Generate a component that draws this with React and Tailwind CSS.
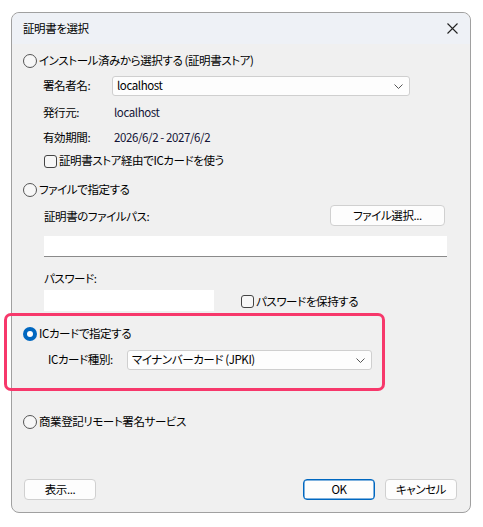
import React from "react";

const font = {
  fontFamily: '"Noto Sans CJK JP", "Noto Sans", sans-serif',
  fontFeatureSettings: '"palt"',
};

function Radio({ checked, label }) {
  return (
    <div className="flex h-[20px] items-center pl-[11px]">
      {checked ? (
        <span className="flex h-[14px] w-[14px] items-center justify-center rounded-full bg-[#0067c0]">
          <span className="h-[6px] w-[6px] rounded-full bg-white" />
        </span>
      ) : (
        <span className="h-[14px] w-[14px] rounded-full border border-[#555] bg-[#f7f7f7]" />
      )}
      <span className="ml-[2px]">{label}</span>
    </div>
  );
}

function Check({ label }) {
  return (
    <div className="flex items-center">
      <span className="h-[13px] w-[13px] rounded-[3px] border border-[#444] bg-[#f7f7f7]" />
      <span className="ml-[2px]">{label}</span>
    </div>
  );
}

function Combo({ value, className }) {
  return (
    <div
      className={`flex h-[20px] items-center justify-between rounded-[3px] border border-[#cfcfcf] bg-[#fdfdfd] pl-[4px] pr-[6px] ${className}`}
    >
      <span>{value}</span>
      <svg width="9" height="5" viewBox="0 0 9 5" fill="none">
        <path d="M0.5 0.5 L4.5 4.5 L8.5 0.5" stroke="#555" strokeWidth="1" />
      </svg>
    </div>
  );
}

function Button({ children, primary, className = "" }) {
  return (
    <div
      className={`flex h-[21px] items-center justify-center rounded-[4px] bg-[#fdfdfd] ${
        primary ? "border border-[#0067c0] shadow-[inset_0_0_0_0.5px_#0067c0]" : "border border-[#d0d0d0]"
      } ${className}`}
    >
      {children}
    </div>
  );
}

export default function App() {
  return (
    <div
      className="min-h-[527px] w-[483px] bg-white pl-[11px] pt-[12px] text-[11.5px] leading-none tracking-[-0.4px] text-black"
      style={font}
    >
      <div className="flex h-[501px] w-[460px] flex-col rounded-[8px] border border-[#a0a0a0] bg-[#f0f0f0]">
        {/* title bar */}
        <div className="flex h-[31px] items-center justify-between rounded-t-[8px] bg-[#eef1f6] pl-[11px] pr-[12px]">
          <span>証明書を選択</span>
          <svg width="11" height="11" viewBox="0 0 11 11">
            <path d="M0.5 0.5 L10.5 10.5 M10.5 0.5 L0.5 10.5" stroke="#222" strokeWidth="1.1" />
          </svg>
        </div>

        <div className="flex flex-1 flex-col pt-[7px]">
          <Radio label="インストール済みから選択する (証明書ストア)" />

          <div className="mt-[5px] flex items-center pl-[31px]">
            <span className="w-[69px]">署名者名:</span>
            <Combo value="localhost" className="w-[298px]" />
          </div>
          <div className="mt-[7px] flex h-[20px] items-center pl-[31px]">
            <span className="w-[71px]">発行元:</span>
            <span className="text-[#141436]">localhost</span>
          </div>
          <div className="mt-[5px] flex h-[20px] items-center pl-[31px]">
            <span className="w-[71px]">有効期間:</span>
            <span className="text-[#141436]">2026/6/2 - 2027/6/2</span>
          </div>
          <div className="mt-[3px] flex h-[20px] items-center pl-[32px]">
            <Check label="証明書ストア経由でICカードを使う" />
          </div>

          <div className="mt-[9px]">
            <Radio label="ファイルで指定する" />
          </div>
          <div className="mt-[5px] flex items-center justify-between pl-[32px] pr-[25px]">
            <span className="pt-[3px]">証明書のファイルパス:</span>
            <Button className="w-[115px]">ファイル選択...</Button>
          </div>
          <div className="ml-[32px] mt-[10px] h-[21px] w-[403px] border-b border-[#8a8a8a] bg-white" />
          <div className="mt-[12px] flex h-[20px] items-center pl-[32px]">パスワード:</div>
          <div className="mt-[1px] flex items-center pl-[32px]">
            <div className="h-[21px] w-[170px] bg-white" />
            <div className="ml-[27px] pt-[2px]">
              <Check label="パスワードを保持する" />
            </div>
          </div>

          {/* IC card section, outlined */}
          <div className="relative mt-[13px]">
            <div className="pointer-events-none absolute bottom-[-21px] left-[-8px] right-[85px] top-[-11px] rounded-[7px] border-[3px] border-[#f7386b]" />
            <Radio checked label="ICカードで指定する" />
            <div className="mt-[6px] flex items-center pl-[36px]">
              <span className="w-[79px]">ICカード種別:</span>
              <Combo value="マイナンバーカード (JPKI)" className="w-[245px]" />
            </div>
          </div>

          <div className="mt-[42px]">
            <Radio label="商業登記リモート署名サービス" />
          </div>

          <div className="mt-auto flex items-center justify-between pb-[12px] pl-[12px] pr-[13px]">
            <Button className="w-[72px]">表示...</Button>
            <div className="flex gap-[10px]">
              <Button primary className="w-[72px]">OK</Button>
              <Button className="w-[72px]">キャンセル</Button>
            </div>
          </div>
        </div>
      </div>
    </div>
  );
}
